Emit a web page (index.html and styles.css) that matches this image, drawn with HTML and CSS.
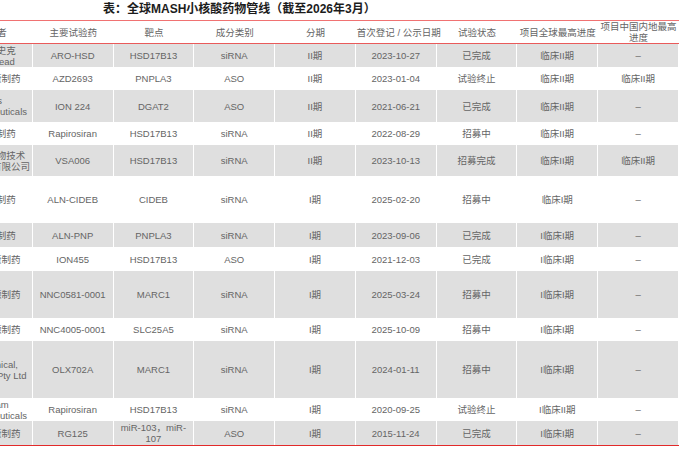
FILE: index.html
```html
<!DOCTYPE html>
<html lang="zh-CN">
<head>
<meta charset="utf-8">
<title>全球MASH小核酸药物管线</title>
<link rel="stylesheet" href="styles.css">
</head>
<body>
<div class="page">
  <div class="title">表：全球MASH小核酸药物管线（截至2026年3月）</div>
  <table class="pipeline">
    <thead>
      <tr class="head">
        <th>研发者</th>
        <th>主要试验药</th>
        <th>靶点</th>
        <th>成分类别</th>
        <th>分期</th>
        <th class="nowrap">首次登记 / 公示日期</th>
        <th>试验状态</th>
        <th>项目全球最高进度</th>
        <th>项目中国内地最高进度</th>
      </tr>
    </thead>
    <tbody>
      <tr class="alt h23">
        <td>葛兰素史克 Arrowhead</td><td>ARO-HSD</td><td>HSD17B13</td><td>siRNA</td><td>II期</td><td>2023-10-27</td><td>已完成</td><td>临床II期</td><td>–</td>
      </tr>
      <tr class="h23">
        <td>阿斯利康制药</td><td>AZD2693</td><td>PNPLA3</td><td>ASO</td><td>II期</td><td>2023-01-04</td><td>试验终止</td><td>临床II期</td><td>临床II期</td>
      </tr>
      <tr class="alt h32">
        <td>Ionis Pharmaceuticals</td><td>ION 224</td><td>DGAT2</td><td>ASO</td><td>II期</td><td>2021-06-21</td><td>已完成</td><td>临床II期</td><td>–</td>
      </tr>
      <tr class="h23">
        <td>再生元制药</td><td>Rapirosiran</td><td>HSD17B13</td><td>siRNA</td><td>II期</td><td>2022-08-29</td><td>招募中</td><td>临床II期</td><td>–</td>
      </tr>
      <tr class="alt h31">
        <td>维亚臻生物技术（上海）有限公司</td><td>VSA006</td><td>HSD17B13</td><td>siRNA</td><td>II期</td><td>2023-10-13</td><td>招募完成</td><td>临床II期</td><td>临床II期</td>
      </tr>
      <tr class="h47">
        <td>再生元制药</td><td>ALN-CIDEB</td><td>CIDEB</td><td>siRNA</td><td>I期</td><td>2025-02-20</td><td>招募中</td><td>临床I期</td><td>–</td>
      </tr>
      <tr class="alt h24">
        <td>再生元制药</td><td>ALN-PNP</td><td>PNPLA3</td><td>siRNA</td><td>I期</td><td>2023-09-06</td><td>已完成</td><td>I临床I期</td><td>–</td>
      </tr>
      <tr class="h24">
        <td>阿斯利康制药</td><td>ION455</td><td>HSD17B13</td><td>ASO</td><td>I期</td><td>2021-12-03</td><td>已完成</td><td>I临床I期</td><td>–</td>
      </tr>
      <tr class="alt h47">
        <td>诺和诺德制药</td><td>NNC0581-0001</td><td>MARC1</td><td>siRNA</td><td>I期</td><td>2025-03-24</td><td>招募中</td><td>I临床I期</td><td>–</td>
      </tr>
      <tr class="h23">
        <td>诺和诺德制药</td><td>NNC4005-0001</td><td>SLC25A5</td><td>siRNA</td><td>I期</td><td>2025-10-09</td><td>招募中</td><td>I临床I期</td><td>–</td>
      </tr>
      <tr class="alt h57">
        <td>Olix Clinical, Australia Pty Ltd</td><td>OLX702A</td><td>MARC1</td><td>siRNA</td><td>I期</td><td>2024-01-11</td><td>招募中</td><td>I临床I期</td><td>–</td>
      </tr>
      <tr class="h23">
        <td>Alnylam Pharmaceuticals</td><td>Rapirosiran</td><td>HSD17B13</td><td>siRNA</td><td>I期</td><td>2020-09-25</td><td>试验终止</td><td>I临床II期</td><td>–</td>
      </tr>
      <tr class="alt h24">
        <td>阿斯利康制药</td><td>RG125</td><td>miR-103，miR-107</td><td>ASO</td><td>I期</td><td>2015-11-24</td><td>已完成</td><td>I临床I期</td><td>–</td>
      </tr>
    </tbody>
  </table>
</div>
</body>
</html>
```

FILE: styles.css
```css
html, body {
  margin: 0;
  padding: 0;
  background: #ffffff;
}

body {
  font-family: "Liberation Sans", "Noto Sans CJK SC", sans-serif;
  color: #656565;
}

.page {
  width: 691px;
  height: 454px;
  overflow: hidden;
}

.title {
  height: 20px;
  line-height: 19px;
  padding-left: 103px;
  font-size: 12px;
  font-weight: bold;
  color: #1c1c1c;
  white-space: nowrap;
}

.pipeline {
  margin-left: -48px;
  width: 727px;
  table-layout: fixed;
  border-collapse: separate;
  border-spacing: 0;
  font-size: 9.5px;
  line-height: 11px;
  border-top: 1px solid #f07272;
  border-bottom: 1px solid #e22a2a;
}

.pipeline th,
.pipeline td {
  padding: 0 1px;
  text-align: center;
  vertical-align: middle;
  font-weight: normal;
}

.pipeline td {
  border-right: 1px solid #ffffff;
}

.pipeline th {
  border-bottom: 1px solid #e95a5a;
}

.head { height: 23px; }

.nowrap { white-space: nowrap; }

.alt { background: #dfdfdf; }

.h23 { height: 23px; }
.h24 { height: 24px; }
.h31 { height: 31px; }
.h32 { height: 32px; }
.h47 { height: 47px; }
.h57 { height: 57px; }
```
